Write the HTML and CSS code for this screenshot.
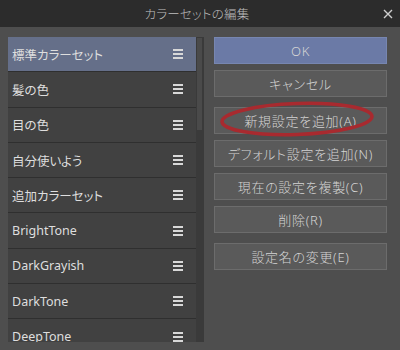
FILE: index.html
```html
<!DOCTYPE html>
<html lang="ja">
    <head>
        <meta charset="UTF-8" />
        <meta name="viewport" content="width=device-width, initial-scale=1.0" />
        <title>カラーセットの編集</title>
        <link rel="stylesheet" href="styles.css">
    </head>
    <body>
        <div class="dialog">
            <div class="titlebar">
                <span class="title">カラーセットの編集</span>
                <svg class="close" width="10" height="10" viewBox="0 0 10 10">
                    <path d="M1 1L9 9M9 1L1 9" stroke="#cfcfcf" stroke-width="1.4" fill="none" />
                </svg>
            </div>

            <div class="content">
                <div class="list">
                    <ul class="rows">
                        <li class="row selected"><span>標準カラーセット</span><i class="menu"></i></li>
                        <li class="row"><span>髪の色</span><i class="menu"></i></li>
                        <li class="row"><span>目の色</span><i class="menu"></i></li>
                        <li class="row"><span>自分使いよう</span><i class="menu"></i></li>
                        <li class="row"><span>追加カラーセット</span><i class="menu"></i></li>
                        <li class="row"><span>BrightTone</span><i class="menu"></i></li>
                        <li class="row"><span>DarkGrayish</span><i class="menu"></i></li>
                        <li class="row"><span>DarkTone</span><i class="menu"></i></li>
                        <li class="row"><span>DeepTone</span><i class="menu"></i></li>
                    </ul>
                    <div class="scrollbar">
                        <div class="thumb"></div>
                    </div>
                </div>

                <div class="actions">
                    <button class="btn primary">OK</button>
                    <button class="btn">キャンセル</button>
                    <button class="btn spaced">新規設定を追加(A)</button>
                    <button class="btn">デフォルト設定を追加(N)</button>
                    <button class="btn">現在の設定を複製(C)</button>
                    <button class="btn">削除(R)</button>
                    <button class="btn spaced">設定名の変更(E)</button>

                    <!-- 赤丸の注釈 -->
                    <svg class="circle" width="173" height="46" viewBox="0 0 173 46">
                        <ellipse cx="83" cy="22" rx="75" ry="15.5" transform="rotate(-2 83 22)"
                            fill="none" stroke="#a82a2f" stroke-width="3.6" />
                    </svg>
                </div>
            </div>
        </div>
    </body>
</html>
```

FILE: styles.css
```css
:root {
    --background: #4e4e4e;
    --titlebar: #2c2c2c;
    --row: #414141;
    --row-line: #2f2f2f;
    --selected: #656f89;
    --button: #5a5a5a;
    --button-border: #6c6c6c;
    --primary: #6b7aa6;
    --text: #dedede;
}

* {
    margin: 0;
    padding: 0;
    box-sizing: border-box;
}

body {
    font-family: "Noto Sans", "Noto Sans CJK JP", sans-serif;
    font-feature-settings: "palt";
    background-color: var(--background);
    color: var(--text);
    width: 400px;
    height: 350px;
    overflow: hidden;
}

.titlebar {
    height: 27px;
    background-color: var(--titlebar);
    display: flex;
    align-items: center;
    justify-content: center;
    position: relative;
}

.title {
    font-size: 12.5px;
    font-weight: 300;
    color: #bebebe;
    letter-spacing: 0.2px;
    margin-left: -6px;
}

.close {
    position: absolute;
    right: 7px;
    top: 9px;
}

.content {
    display: flex;
    gap: 10px;
    padding: 10px 13px 0 8px;
}

.list {
    width: 196px;
    height: 305px;
    overflow: hidden;
    display: flex;
    background-color: #383838;
}

.rows {
    list-style: none;
    width: 188px;
}

.row {
    height: 35.3px;
    display: flex;
    align-items: center;
    justify-content: space-between;
    padding: 0 13px 0 4px;
    background-color: var(--row);
    border-bottom: 1px solid var(--row-line);
    font-size: 12.5px;
}

.row.selected {
    background-color: var(--selected);
}

.menu {
    width: 10px;
    height: 10px;
    border-top: 2px solid #d8d8d8;
    border-bottom: 2px solid #d8d8d8;
    position: relative;
}

.menu::after {
    content: "";
    position: absolute;
    left: 0;
    right: 0;
    top: 2px;
    height: 2px;
    background-color: #d8d8d8;
}

.scrollbar {
    width: 8px;
    padding: 1px 2px 0 1px;
    background-color: #3a3a3a;
}

.thumb {
    height: 92px;
    background-color: #4a4a4a;
}

.actions {
    width: 173px;
    display: flex;
    flex-direction: column;
    gap: 6px;
    position: relative;
}

.btn {
    height: 27px;
    background-color: var(--button);
    border: 1px solid var(--button-border);
    color: #d4d4d4;
    font-family: inherit;
    font-feature-settings: "palt";
    font-size: 13px;
    font-weight: 300;
    letter-spacing: 0.7px;
}

.btn.primary {
    background-color: var(--primary);
    border-color: #7786b0;
}

.btn.spaced {
    margin-top: 4px;
}

.circle {
    position: absolute;
    left: 0;
    top: 60px;
}
```
